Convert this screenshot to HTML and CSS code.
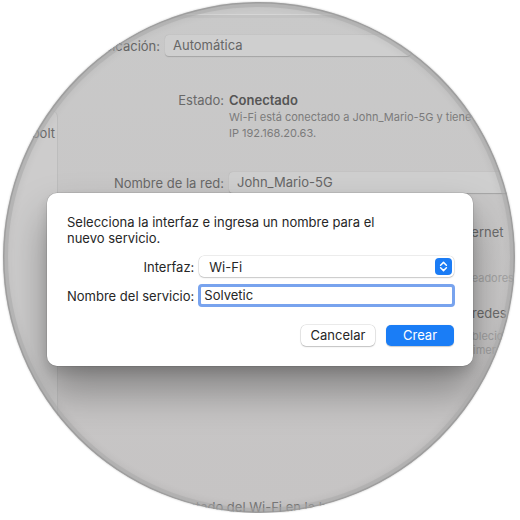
FILE: index.html
```html
<!DOCTYPE html>
<html lang="es">
<head>
<meta charset="utf-8">
<link rel="stylesheet" href="styles.css">
</head>
<body>
<div class="lens">
  <div class="band"></div>
  <div class="loc-row">
    <span class="loc-label">Ubicación:</span>
    <div class="bg-popup loc-popup">Automática</div>
  </div>
  <div class="body">
    <div class="sidebar"><div class="side-item"><span>Thunderbolt</span></div></div>
    <div class="main">
      <div class="row status-row">
        <span class="label">Estado:</span>
        <span class="status">Conectado</span>
      </div>
      <p class="desc">Wi-Fi está conectado a John_Mario-5G y tiene la dirección<br>IP 192.168.20.63.</p>
      <div class="row net-row">
        <span class="label">Nombre de la red:</span>
        <div class="bg-popup net-popup">John_Mario-5G</div>
      </div>
      <div class="notes">
        <div class="note big n1">Internet</div>
        <div class="note small n2">rastreadores</div>
        <div class="note big n3">las redes</div>
        <div class="note small n4">establecidar</div>
        <div class="note small n5">primer</div>
      </div>
      <div class="bottom-note">Mostrar estado del Wi-Fi en la barra de menús</div>
    </div>
  </div>

  <div class="dialog">
    <p class="prompt">Selecciona la interfaz e ingresa un nombre para el<br>nuevo servicio.</p>
    <div class="form">
      <span class="f-label">Interfaz:</span>
      <div class="popup">
        <span>Wi-Fi</span>
        <svg class="stepper" width="17" height="17" viewBox="0 0 17 17">
          <rect width="17" height="17" rx="4" fill="#1b7cf5"/>
          <path d="M5.6 7.2 L8.5 4.4 L11.4 7.2" fill="none" stroke="#fff" stroke-width="1.5" stroke-linecap="round" stroke-linejoin="round"/>
          <path d="M5.6 9.8 L8.5 12.6 L11.4 9.8" fill="none" stroke="#fff" stroke-width="1.5" stroke-linecap="round" stroke-linejoin="round"/>
        </svg>
      </div>
      <span class="f-label">Nombre del servicio:</span>
      <div class="field">Solvetic</div>
    </div>
    <div class="buttons">
      <button class="btn cancel">Cancelar</button>
      <button class="btn primary">Crear</button>
    </div>
  </div>
</div>
</body>
</html>
```

FILE: styles.css
```css
html, body {
  margin: 0;
  padding: 0;
  background: #ffffff;
}

body {
  font-family: Inter, "Liberation Sans", Arial, sans-serif;
  font-size: 13px;
}

.lens {
  position: relative;
  width: 512px;
  height: 511px;
  margin: 2px 0 0 3px;
  border-radius: 50%;
  overflow: hidden;
  background: linear-gradient(#c9c9c9 0px, #c8c7c7 200px, #c6c4c4 511px);
  box-shadow: 0 0 2px rgba(0, 0, 0, 0.25);
}

.lens::after {
  content: "";
  position: absolute;
  inset: 0;
  border-radius: 50%;
  box-shadow: inset 0 0 0 1.5px rgba(150, 150, 150, 0.7), inset 0 0 0 5px rgba(170, 170, 170, 0.55), inset 0 0 8px 5px rgba(0, 0, 0, 0.07);
  pointer-events: none;
  z-index: 5;
}

.band {
  height: 12px;
  background: #cbcbcb;
  border-bottom: 1px solid #d6d6d6;
  box-shadow: 0 3px 0 #c3c3c3;
}

.loc-row {
  display: flex;
  align-items: center;
  gap: 5px;
  margin-top: 20px;
  height: 21px;
}

.loc-label {
  width: 157px;
  text-align: right;
  color: #666;
  white-space: nowrap;
}

.bg-popup {
  height: 21px;
  line-height: 21px;
  box-sizing: border-box;
  padding-left: 8px;
  background: #cfcfcf;
  border-radius: 4px;
  box-shadow: 0 0.5px 1px rgba(0, 0, 0, 0.18);
  color: #666;
}

.loc-popup {
  width: 246px;
}

.body {
  display: flex;
  margin-top: 4px;
}

.sidebar {
  width: 54px;
  flex: none;
  margin-top: 51px;
  height: 360px;
  background: #cdcccc;
  border-right: 1px solid #bdbdbd;
  border-top-right-radius: 6px;
  overflow: hidden;
}

.side-item {
  display: flex;
  justify-content: flex-end;
  padding-top: 14px;
  padding-right: 2px;
  line-height: 16px;
  color: #6a6a6a;
  white-space: nowrap;
}

.side-item span {
  flex: none;
}

.main {
  flex: 1;
  padding-top: 32px;
}

.row {
  display: flex;
  align-items: center;
  gap: 5px;
  white-space: nowrap;
}

.label {
  width: 166px;
  text-align: right;
  color: #686868;
}

.status-row {
  line-height: 16px;
}

.status {
  font-weight: 600;
  color: #555;
}

.desc {
  margin: 1px 0 0 171px;
  font-size: 11px;
  line-height: 16px;
  color: #7b7b7b;
  white-space: nowrap;
}

.net-row {
  margin-top: 31px;
  height: 21px;
}

.net-popup {
  width: 290px;
  flex: none;
}

.notes {
  margin: 31px 0 0 390px;
  white-space: nowrap;
}

.note.big {
  font-size: 13px;
  line-height: 16px;
  color: #6b6b6b;
}

.note.small {
  font-size: 11px;
  line-height: 14px;
  color: #a2a2a2;
}

.n1 { padding-left: 8px; }
.n2 { margin-top: 31px; }
.n3 { margin-top: 20px; padding-left: 3px; }
.n4 { margin-top: 8px; padding-left: 2px; }
.n5 { padding-left: 14px; }

.bottom-note {
  margin-top: 142px;
  padding-left: 72px;
  line-height: 16px;
  color: #777;
  white-space: nowrap;
}

/* dialog */
.dialog {
  position: absolute;
  left: 44px;
  top: 191px;
  width: 426px;
  box-sizing: border-box;
  padding: 21px 19px 20px 20px;
  background: #ffffff;
  border-radius: 10px;
  box-shadow: 0 0 0 0.5px rgba(0, 0, 0, 0.15), 0 24px 40px rgba(0, 0, 0, 0.34), 0 6px 12px rgba(0, 0, 0, 0.12);
  color: #262626;
  z-index: 3;
}

.prompt {
  margin: 0;
  line-height: 16px;
}

.form {
  display: grid;
  grid-template-columns: auto 1fr;
  column-gap: 5px;
  row-gap: 10px;
  margin-top: 10px;
  align-items: center;
}

.f-label {
  text-align: right;
  white-space: nowrap;
}

.popup {
  display: flex;
  align-items: center;
  justify-content: space-between;
  height: 21px;
  box-sizing: border-box;
  padding: 0 2px 0 10px;
  background: #fff;
  border-radius: 5px;
  box-shadow: 0 0 0 0.5px rgba(0, 0, 0, 0.14), 0 1px 1.5px rgba(0, 0, 0, 0.16);
}

.stepper {
  display: block;
}

.field {
  height: 17px;
  line-height: 17px;
  margin: 0 2px;
  padding-left: 3px;
  background: #fff;
  outline: 3px solid #78a3ee;
  border-radius: 1px;
}

.buttons {
  display: flex;
  justify-content: flex-end;
  gap: 11px;
  margin-top: 21px;
}

.btn {
  font-family: Inter, "Liberation Sans", Arial, sans-serif;
  font-size: 13px;
  height: 21px;
  line-height: 21px;
  padding: 0;
  border: none;
  border-radius: 5px;
}

.cancel {
  width: 74px;
  background: #fff;
  color: #262626;
  box-shadow: 0 0 0 0.5px rgba(0, 0, 0, 0.16), 0 1px 1.5px rgba(0, 0, 0, 0.18);
}

.primary {
  width: 68px;
  background: #1a7df6;
  color: #fff;
  box-shadow: 0 0.5px 1px rgba(0, 0, 0, 0.2);
}
```
